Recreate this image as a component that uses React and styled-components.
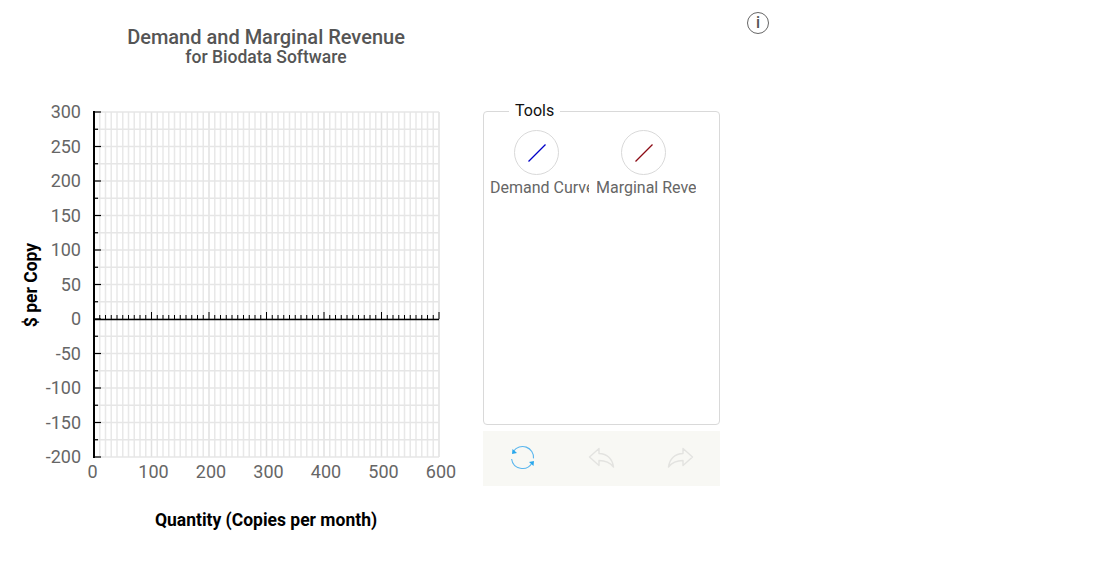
import React from 'react';
import styled, { createGlobalStyle } from 'styled-components';

const GlobalStyle = createGlobalStyle`
  html, body {
    margin: 0;
    padding: 0;
    background: #fff;
    font-family: Roboto, "Liberation Sans", sans-serif;
  }
`;

const Page = styled.div`
  display: flex;
  align-items: flex-start;
  width: 1098px;
  height: 566px;
  overflow: hidden;
`;

const ChartColumn = styled.div`
  width: 483px;
  flex-shrink: 0;
`;

const Header = styled.header`
  height: 100px;
  box-sizing: border-box;
  padding: 26px 1px 0 50px;
  text-align: center;
  color: #555;
`;

const Title = styled.div`
  font-size: 20px;
  font-weight: 500;
  line-height: 22px;
`;

const Subtitle = styled.div`
  font-size: 17.5px;
  font-weight: 500;
  line-height: 18px;
`;

const ChartSvg = styled.svg`
  display: block;
  width: 483px;
  height: 440px;
`;

const TickLabel = styled.text`
  font-family: Roboto, sans-serif;
  font-size: 18px;
  fill: #666;
`;

const AxisTitle = styled.text`
  font-family: Roboto, sans-serif;
  font-size: 17.5px;
  font-weight: 700;
  fill: #000;
`;

const ToolsColumn = styled.div`
  width: 237px;
  flex-shrink: 0;
  padding-top: 102px;
`;

const ToolsBox = styled.fieldset`
  box-sizing: border-box;
  height: 323px;
  margin: 0;
  padding: 10px 6px 0;
  border: 1px solid #d9d9d9;
  border-radius: 4px;
  display: block;
`;

const ToolsLegend = styled.legend`
  margin-left: 19px;
  padding: 0 6px;
  font-size: 16px;
  line-height: 18px;
  color: #111;
`;

const ToolList = styled.div`
  display: flex;
  gap: 8px;
`;

const Tool = styled.div`
  width: 99px;
  overflow: hidden;
`;

const ToolCircle = styled.div`
  box-sizing: border-box;
  width: 45px;
  height: 45px;
  margin-left: 24px;
  border: 1px solid #d9d9d9;
  border-radius: 50%;
  display: flex;
  align-items: center;
  justify-content: center;
`;

const ToolLabel = styled.div`
  margin-top: 3px;
  margin-left: ${(p) => p.$shift || 0}px;
  font-size: 16px;
  line-height: 19px;
  color: #666;
  white-space: nowrap;
`;

const ActionBar = styled.div`
  height: 55px;
  margin-top: 6px;
  background: #f8f8f4;
  display: flex;
  align-items: center;
  padding-left: 26px;
  gap: 52px;
`;

const ActionIcon = styled.svg`
  width: 27px;
  height: 27px;
  flex-shrink: 0;
`;

const InfoButton = styled.div`
  box-sizing: border-box;
  width: 22px;
  height: 22px;
  margin: 12px 0 0 27px;
  border: 1.5px solid #666;
  border-radius: 50%;
  color: #555;
  font-size: 16px;
  font-weight: 500;
  line-height: 19px;
  text-align: center;
`;

const X0 = 94;
const XSTEP = 5.75;
const Y0 = 12;
const YSTEP = 17.25;
const ZERO = 219;

const ToolGlyph = ({ color }) => (
  <svg width="20" height="20" viewBox="0 0 20 20">
    <line x1="1.5" y1="18.5" x2="18.5" y2="1.5" stroke={color} strokeWidth="1.3" />
  </svg>
);

const Chart = () => {
  const verticals = Array.from({ length: 61 }, (_, i) => X0 + i * XSTEP);
  const horizontals = Array.from({ length: 21 }, (_, i) => Y0 + i * YSTEP);
  const yLabels = [300, 250, 200, 150, 100, 50, 0, -50, -100, -150, -200];
  const xLabels = [0, 100, 200, 300, 400, 500, 600];

  return (
    <ChartSvg viewBox="0 0 483 440">
      {verticals.map((x, i) => (
        <line
          key={x}
          x1={x}
          y1={Y0}
          x2={x}
          y2={Y0 + 345}
          stroke={i % 10 === 0 ? '#e0e0e0' : '#e8e8e8'}
          strokeWidth="1.5"
        />
      ))}
      {horizontals.map((y) => (
        <line key={y} x1={X0} y1={y} x2={X0 + 345} y2={y} stroke="#e6e6e6" strokeWidth="1.5" />
      ))}

      {/* y axis and its ticks */}
      <line x1={X0} y1={Y0 - 1} x2={X0} y2={Y0 + 346} stroke="#000" strokeWidth="2" />
      {horizontals.map((y, i) => (
        <line
          key={y}
          x1={X0}
          y1={y}
          x2={X0 + (i % 2 === 0 ? 7 : 4)}
          y2={y}
          stroke="#000"
          strokeWidth="1.2"
        />
      ))}

      {/* x axis on the zero line */}
      <line x1={X0 - 1} y1={ZERO + 0.5} x2={X0 + 345} y2={ZERO + 0.5} stroke="#000" strokeWidth="1.6" />
      {verticals.map((x, i) => (
        <line
          key={x}
          x1={x}
          y1={ZERO}
          x2={x}
          y2={ZERO - (i % 10 === 0 ? 7 : 4)}
          stroke="#000"
          strokeWidth="1"
        />
      ))}

      {yLabels.map((v, i) => (
        <TickLabel key={v} x="81" y={Y0 + i * 34.5 + 6} textAnchor="end">
          {v}
        </TickLabel>
      ))}
      {xLabels.map((v, i) => (
        <TickLabel key={v} x={i === 0 ? 92.5 : X0 + i * 57.5 + 2} y="378" textAnchor="middle">
          {v}
        </TickLabel>
      ))}

      <AxisTitle x="266" y="426" textAnchor="middle">
        Quantity (Copies per month)
      </AxisTitle>
      <AxisTitle transform="translate(37 185) rotate(-90)" textAnchor="middle">
        $ per Copy
      </AxisTitle>
    </ChartSvg>
  );
};

const App = () => (
  <>
    <GlobalStyle />
    <Page>
      <ChartColumn>
        <Header>
          <Title>Demand and Marginal Revenue</Title>
          <Subtitle>for Biodata Software</Subtitle>
        </Header>
        <Chart />
      </ChartColumn>

      <ToolsColumn>
        <ToolsBox>
          <ToolsLegend>Tools</ToolsLegend>
          <ToolList>
            <Tool>
              <ToolCircle>
                <ToolGlyph color="#0000c8" />
              </ToolCircle>
              <ToolLabel>Demand Curve</ToolLabel>
            </Tool>
            <Tool>
              <ToolCircle>
                <ToolGlyph color="#8b0a14" />
              </ToolCircle>
              <ToolLabel $shift={-1}>Marginal Revenue</ToolLabel>
            </Tool>
          </ToolList>
        </ToolsBox>
        <ActionBar>
          <ActionIcon viewBox="0 0 27 27" fill="none">
            <path d="M4.5 6.2A11 11 0 0 1 24.5 13.4" stroke="#5ab6ee" strokeWidth="1.1" />
            <path d="M23 18A11 11 0 0 1 2.6 14" stroke="#5ab6ee" strokeWidth="1.1" />
            <path d="M3.5 4 L3 9 L8 8 Z" fill="#2aa8ec" />
            <path d="M24.5 21 L25 16 L20 17 Z" fill="#2aa8ec" />
          </ActionIcon>
          <ActionIcon viewBox="0 0 27 27" fill="none">
            <path
              d="M1.5 12 L11 3.5 V8.5 C19 8.5 24.5 14 25.5 22 C22 17.5 17.5 15.5 11 15.5 V20.5 Z"
              stroke="#e3e3e0"
              strokeWidth="1.4"
              strokeLinejoin="round"
            />
          </ActionIcon>
          <ActionIcon viewBox="0 0 27 27" fill="none">
            <path
              d="M25.5 12 L16 3.5 V8.5 C8 8.5 2.5 14 1.5 22 C5 17.5 9.5 15.5 16 15.5 V20.5 Z"
              stroke="#e3e3e0"
              strokeWidth="1.4"
              strokeLinejoin="round"
            />
          </ActionIcon>
        </ActionBar>
      </ToolsColumn>

      <InfoButton>i</InfoButton>
    </Page>
  </>
);

export default App;
